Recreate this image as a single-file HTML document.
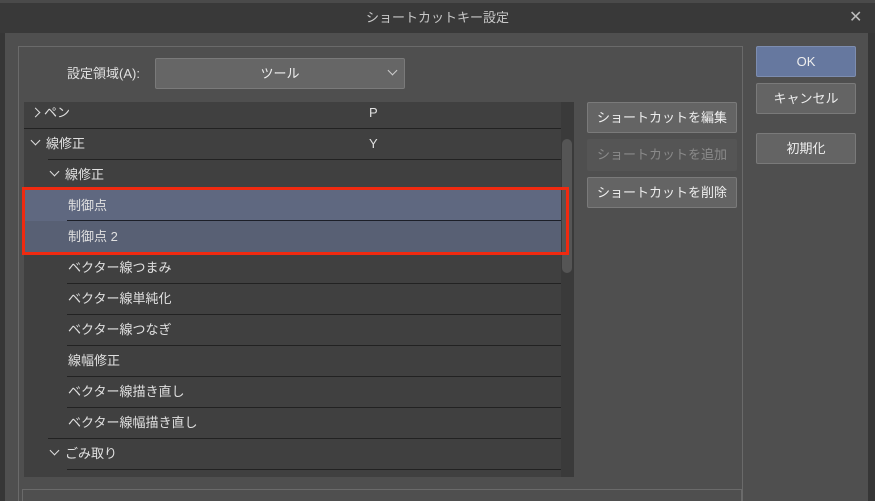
<!DOCTYPE html>
<html><head><meta charset="utf-8"><style>
*{margin:0;padding:0;box-sizing:border-box}
html,body{width:875px;height:501px;overflow:hidden}
body{background:#363636;font-family:"Liberation Sans","Noto Sans CJK JP",sans-serif;font-size:13px;color:#e0e0e0;position:relative}
.a{position:absolute}
.btn{position:absolute;background:#646464;border:1px solid #7a7a7a;border-radius:2px;color:#eee;text-align:center;font-size:13px}
.row{position:absolute;left:24px;width:537px;height:31px;line-height:31px}
.sep{position:absolute;height:1px;background:#222;right:0}
.chev{display:inline-block;width:7px;height:7px;border-right:1.3px solid #ddd;border-bottom:1.3px solid #ddd}
</style></head><body>
<div class="a" style="left:0;top:0;width:875px;height:3px;background:#4a4a4a"></div>
<div class="a" style="left:0;top:3px;width:875px;height:30px;background:#393939;text-align:center;line-height:30px;color:#c8c8c8">ショートカットキー設定</div>
<div class="a" style="left:849px;top:8px;font-size:16px;color:#bbb;line-height:20px">✕</div>
<div class="a" style="left:5px;top:33px;width:863px;height:468px;background:#4f4f4f"></div>
<div class="a" style="left:18px;top:46px;width:725px;height:460px;border:1px solid #6a6a6a;border-bottom:none"></div>
<div class="a" style="left:67px;top:64px;line-height:20px">設定領域(A):</div>
<div class="btn" style="left:155px;top:58px;width:250px;height:31px;line-height:29px;background:#666">ツール</div>
<div class="a" style="left:389px;top:67px;width:7px;height:7px;border-right:1.3px solid #ccc;border-bottom:1.3px solid #ccc;transform:rotate(45deg)"></div>
<div class="a" style="left:24px;top:102px;width:550px;height:375px;background:#404040;overflow:hidden">
 <div class="a" style="left:537px;top:0;width:13px;height:375px;background:#3a3a3a"></div>
 <div class="a" style="left:538px;top:37px;width:10px;height:134px;background:#555;border-radius:5px"></div>
</div>
<div class="a" style="left:24px;top:102px;width:537px;height:375px;overflow:hidden">
 <div class="row" style="left:0;top:-5px"><span class="a" style="left:8px;top:12px;width:7px;height:7px;border-right:1.3px solid #ddd;border-top:1.3px solid #ddd;transform:rotate(45deg)"></span><span class="a" style="left:20px">ペン</span><span class="a" style="left:345px">P</span></div>
 <div class="sep" style="left:0;top:26px"></div>
 <div class="row" style="left:0;top:26px"><span class="a chev" style="left:8px;top:9px;transform:rotate(45deg)"></span><span class="a" style="left:22px">線修正</span><span class="a" style="left:345px">Y</span></div>
 <div class="sep" style="left:24px;top:57px"></div>
 <div class="row" style="left:0;top:57px"><span class="a chev" style="left:27px;top:9px;transform:rotate(45deg)"></span><span class="a" style="left:41px">線修正</span></div>
 <div class="a" style="left:0;top:88px;width:537px;height:31px;background:#5f6880"></div>
 <div class="a" style="left:0;top:119px;width:537px;height:31px;background:#586074"></div>
 <div class="sep" style="left:43px;top:118px;background:#1c1f28"></div>
 <div class="row" style="left:0;top:88px"><span class="a" style="left:44px">制御点</span></div>
 <div class="row" style="left:0;top:119px"><span class="a" style="left:44px">制御点 2</span></div>
 <div class="row" style="left:0;top:150px"><span class="a" style="left:44px">ベクター線つまみ</span></div>
 <div class="sep" style="left:43px;top:181px"></div>
 <div class="row" style="left:0;top:181px"><span class="a" style="left:44px">ベクター線単純化</span></div>
 <div class="sep" style="left:43px;top:212px"></div>
 <div class="row" style="left:0;top:212px"><span class="a" style="left:44px">ベクター線つなぎ</span></div>
 <div class="sep" style="left:43px;top:243px"></div>
 <div class="row" style="left:0;top:243px"><span class="a" style="left:44px">線幅修正</span></div>
 <div class="sep" style="left:43px;top:274px"></div>
 <div class="row" style="left:0;top:274px"><span class="a" style="left:44px">ベクター線描き直し</span></div>
 <div class="sep" style="left:43px;top:305px"></div>
 <div class="row" style="left:0;top:305px"><span class="a" style="left:44px">ベクター線幅描き直し</span></div>
 <div class="sep" style="left:24px;top:336px"></div>
 <div class="row" style="left:0;top:336px"><span class="a chev" style="left:27px;top:9px;transform:rotate(45deg)"></span><span class="a" style="left:41px">ごみ取り</span></div>
 <div class="sep" style="left:43px;top:367px"></div>
</div>
<div class="a" style="left:22px;top:187px;width:547px;height:68px;border:3px solid #f02a10"></div>
<div class="a" style="left:22px;top:489px;width:720px;height:20px;border:1px solid #6a6a6a;background:#4f4f4f"></div>
<div class="btn" style="left:587px;top:102px;width:150px;height:31px;line-height:29px">ショートカットを編集</div>
<div class="btn" style="left:587px;top:139px;width:150px;height:32px;line-height:30px;background:#555;border-color:#555;color:#8a8a8a">ショートカットを追加</div>
<div class="btn" style="left:587px;top:177px;width:150px;height:31px;line-height:29px">ショートカットを削除</div>
<div class="btn" style="left:756px;top:46px;width:100px;height:31px;line-height:29px;background:#66789f;border-color:#7d8db0">OK</div>
<div class="btn" style="left:756px;top:83px;width:100px;height:31px;line-height:29px">キャンセル</div>
<div class="btn" style="left:756px;top:133px;width:100px;height:31px;line-height:29px">初期化</div>
</body></html>
